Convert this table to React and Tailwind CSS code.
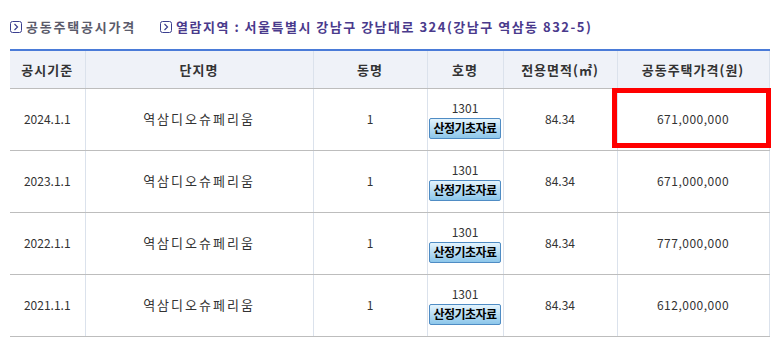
import React from 'react';

const rows = [
    { year: '2024.1.1', price: '671,000,000' },
    { year: '2023.1.1', price: '671,000,000' },
    { year: '2022.1.1', price: '777,000,000' },
    { year: '2021.1.1', price: '612,000,000' },
];

const BoxArrow = () => (
    <svg width="12" height="12" viewBox="0 0 12 12" className="shrink-0">
        <rect x="0.5" y="0.5" width="11" height="11" rx="2" fill="white" stroke="#3b3f8f" />
        <path d="M4.5 3 L7.5 6 L4.5 9" fill="none" stroke="#3b3f8f" strokeWidth="1.2" />
    </svg>
);

const App = () => {
    return (
        <div className="w-[783px] h-[348px] bg-white overflow-hidden font-['Noto_Sans_CJK_KR',sans-serif] relative">
            <div className="flex items-center h-[18px] mt-[18px] pl-[10px] text-[13px] font-bold">
                <BoxArrow />
                <span className="ml-[4px] text-[#5b5b6b] tracking-[1.8px]">공동주택공시가격</span>
                <span className="ml-[24px]"><BoxArrow /></span>
                <span className="ml-[4px] text-[#4a3a8c] tracking-[1.5px]">
                    열람지역 : 서울특별시 강남구 강남대로 324(강남구 역삼동 832-5)
                </span>
            </div>

            <table className="ml-[10px] mt-[13px] w-[759px] border-collapse table-fixed border-t-2 border-t-[#4a7bd8]">
                <colgroup>
                    <col className="w-[75px]" />
                    <col className="w-[228px]" />
                    <col className="w-[114px]" />
                    <col className="w-[76px]" />
                    <col className="w-[114px]" />
                    <col className="w-[152px]" />
                </colgroup>
                <thead>
                    <tr className="h-[38px] bg-[#eff2f8] text-[13px] font-bold text-[#333] tracking-[1px]">
                        <th className="border-b border-b-[#bdbdbd] border-r border-r-[#dbe2ec]">공시기준</th>
                        <th className="border-b border-b-[#bdbdbd] border-r border-r-[#dbe2ec]">단지명</th>
                        <th className="border-b border-b-[#bdbdbd] border-r border-r-[#dbe2ec]">동명</th>
                        <th className="border-b border-b-[#bdbdbd] border-r border-r-[#dbe2ec]">호명</th>
                        <th className="border-b border-b-[#bdbdbd] border-r border-r-[#dbe2ec]">전용면적(㎡)</th>
                        <th className="border-b border-b-[#bdbdbd] border-r border-r-[#dbe2ec]">공동주택가격(원)</th>
                    </tr>
                </thead>
                <tbody className="text-[12px] text-[#333] text-center">
                    {rows.map((r) => (
                        <tr key={r.year} className="h-[62px]">
                            <td className="border-b border-b-[#bdbdbd] border-r border-r-[#dbe2ec]">{r.year}</td>
                            <td className="border-b border-b-[#bdbdbd] border-r border-r-[#dbe2ec] text-[13px] tracking-[2px]">역삼디오슈페리움</td>
                            <td className="border-b border-b-[#bdbdbd] border-r border-r-[#dbe2ec]">1</td>
                            <td className="border-b border-b-[#bdbdbd] border-r border-r-[#dbe2ec]">
                                <div className="flex flex-col items-center">
                                    <span className="leading-[16px]">1301</span>
                                    <span className="mt-[2px] px-[3px] h-[21px] flex items-center rounded-[2px] border border-[#4f8cc4] bg-gradient-to-b from-[#e4f4fd] to-[#8cc6ea] text-[12px] font-bold text-black tracking-[-0.5px]">
                                        산정기초자료
                                    </span>
                                </div>
                            </td>
                            <td className="border-b border-b-[#bdbdbd] border-r border-r-[#dbe2ec]">84.34</td>
                            <td className="border-b border-b-[#bdbdbd] border-r border-r-[#dbe2ec] tracking-[0.5px]">{r.price}</td>
                        </tr>
                    ))}
                </tbody>
            </table>

            <div className="absolute left-[612px] top-[88px] w-[159px] h-[60px] border-[5px] border-[#ff0000]" />
        </div>
    );
};

export default App;
